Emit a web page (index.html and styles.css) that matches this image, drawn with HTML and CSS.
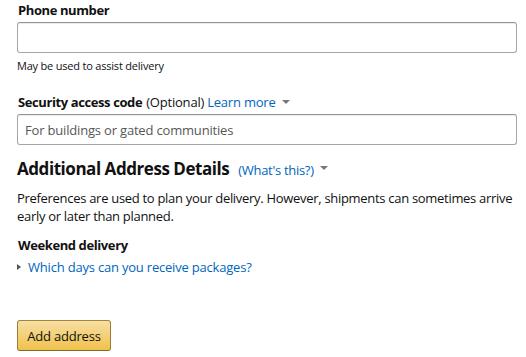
FILE: index.html
```html
<!DOCTYPE html>
<html>
<head>
<meta charset="utf-8">
<link rel="stylesheet" href="styles.css">
</head>
<body>
<div class="form">
  <label class="label">Phone number</label>
  <div class="input"></div>
  <div class="hint">May be used to assist delivery</div>

  <div class="label label-sec">Security access code <span class="opt">(Optional)</span> <a class="link">Learn more</a><span class="caret"></span></div>
  <div class="input"><span class="placeholder">For buildings or gated communities</span></div>

  <h2 class="heading">Additional Address Details <a class="link small">(What's this?)</a><span class="caret"></span></h2>
  <p class="para">Preferences are used to plan your delivery. However, shipments can sometimes arrive early or later than planned.</p>

  <div class="label label-week">Weekend delivery</div>
  <div class="expander"><span class="tri"></span><a class="link">Which days can you receive packages?</a></div>

  <button class="btn">Add address</button>
</div>
</body>
</html>
```

FILE: styles.css
```css
html, body { margin: 0; padding: 0; background: #fff; }
body { font-family: "Open Sans", "Noto Sans", sans-serif; color: #111; font-size: 13px; }
.form { padding: 1px 0 0 17px; width: 500px; display: flex; flex-direction: column; align-items: flex-start; }
.label { font-weight: 700; font-size: 13px; line-height: 19px; padding-left: 1px; letter-spacing: -0.4px; }
.label-sec { margin-top: 20px; }
.opt { font-weight: 400; letter-spacing: -0.2px; margin-left: 1px; }
.link { color: #0066c0; font-weight: 400; text-decoration: none; letter-spacing: -0.2px; }
.caret { display: inline-block; width: 0; height: 0; border-left: 4px solid transparent; border-right: 4px solid transparent; border-top: 4px solid #777; margin-left: 6px; vertical-align: middle; position: relative; top: -2px; }
.input { box-sizing: border-box; width: 500px; height: 31px; border: 1px solid #a6a6a6; border-top-color: #949494; border-radius: 3px; margin-top: 2px; display: flex; align-items: center; padding-left: 7px; box-shadow: 0 1px 0 rgba(0,0,0,.07) inset; }
.placeholder { color: #575757; font-size: 13px; letter-spacing: -0.18px; }
.hint { font-size: 11px; line-height: 15px; margin-top: 5px; letter-spacing: -0.2px; }
.heading { font-size: 17px; font-weight: 700; margin: 12px 0 0; line-height: 24px; letter-spacing: -0.45px; }
.heading .small { font-size: 13px; margin-left: 5px; letter-spacing: -0.3px; }
.para { margin: 7px 0 0; font-size: 13px; line-height: 18px; width: 500px; letter-spacing: -0.3px; }
.label-week { margin-top: 11px; }
.expander { font-size: 13px; line-height: 20px; margin-top: 2px; display: flex; align-items: center; }
.tri { display: inline-block; width: 0; height: 0; border-top: 3px solid transparent; border-bottom: 3px solid transparent; border-left: 4px solid #555; margin-right: 7px; }
.btn { margin-top: 43px; width: 94px; height: 31px; box-sizing: border-box; border: 1px solid #a88734; border-color: #a88734 #9c7e31 #846a29; border-radius: 3px; background: linear-gradient(to bottom, #f7dfa5, #f0c14b); font-family: inherit; font-size: 13px; color: #111; padding: 0; letter-spacing: -0.2px; }
```
